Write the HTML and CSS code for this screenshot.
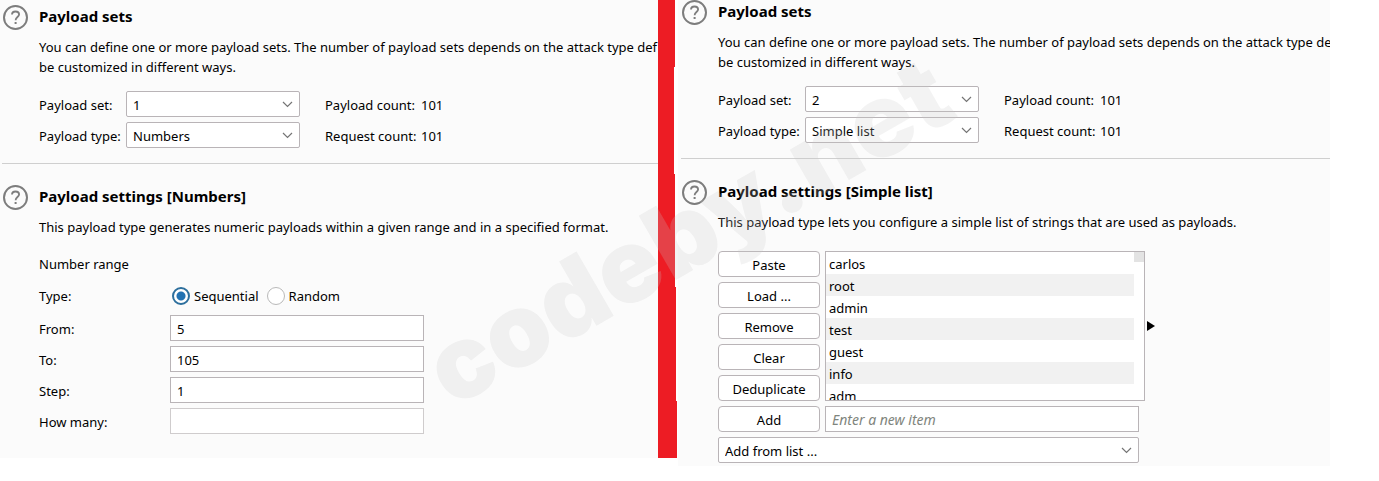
FILE: index.html
```html
<!DOCTYPE html>
<html lang="en">
<head>
<meta charset="utf-8">
<title>Payload sets</title>
<link rel="stylesheet" href="styles.css">
</head>
<body>
<svg class="defs" aria-hidden="true">
  <symbol id="help" viewBox="0 0 25 25">
    <circle cx="12.5" cy="12.5" r="11.5" fill="none" stroke="#7d7d7d" stroke-width="2"/>
    <path d="M9 9.6C9 7.6 10.4 6.5 12.5 6.5S16.1 7.7 16.1 9.5C16.1 12 12.6 12.2 12.6 15.2" fill="none" stroke="#7d7d7d" stroke-width="1.8"/>
    <rect x="11.6" y="17" width="2" height="2" fill="#7d7d7d"/>
  </symbol>
  <symbol id="chevron" viewBox="0 0 11 7">
    <path d="M1 1L5.5 5.5L10 1" fill="none" stroke="#757575" stroke-width="1.2"/>
  </symbol>
</svg>
<main class="board">
  <div class="panel panel-left">
    <section class="section">
      <svg class="help"><use href="#help"/></svg>
      <div class="body">
        <h2>Payload sets</h2>
        <p class="desc">You can define one or more payload sets. The number of payload sets depends on the attack type def<br>be customized in different ways.</p>
        <div class="sets">
          <label for="set1">Payload set:</label>
          <div class="select"><select id="set1"><option>1</option></select><svg class="chevron"><use href="#chevron"/></svg></div>
          <span class="count">Payload count:</span><span>101</span>
          <label for="type1">Payload type:</label>
          <div class="select"><select id="type1"><option>Numbers</option></select><svg class="chevron"><use href="#chevron"/></svg></div>
          <span class="count">Request count:</span><span>101</span>
        </div>
      </div>
    </section>
    <hr>
    <section class="section">
      <svg class="help"><use href="#help"/></svg>
      <div class="body">
        <h2>Payload settings [Numbers]</h2>
        <p class="desc">This payload type generates numeric payloads within a given range and in a specified format.</p>
        <h3>Number range</h3>
        <div class="range">
          <span>Type:</span>
          <div class="radios">
            <label><input type="radio" name="order" checked>Sequential</label>
            <label><input type="radio" name="order">Random</label>
          </div>
          <label for="from">From:</label><input class="field" type="text" id="from" value="5">
          <label for="to">To:</label><input class="field" type="text" id="to" value="105">
          <label for="step">Step:</label><input class="field" type="text" id="step" value="1">
          <label for="many">How many:</label><input class="field" type="text" id="many" disabled>
        </div>
      </div>
    </section>
  </div>
  <div class="divider"></div>
  <div class="panel panel-right">
    <section class="section">
      <svg class="help"><use href="#help"/></svg>
      <div class="body">
        <h2>Payload sets</h2>
        <p class="desc">You can define one or more payload sets. The number of payload sets depends on the attack type de<br>be customized in different ways.</p>
        <div class="sets">
          <label for="set2">Payload set:</label>
          <div class="select"><select id="set2"><option>2</option></select><svg class="chevron"><use href="#chevron"/></svg></div>
          <span class="count">Payload count:</span><span>101</span>
          <label for="type2">Payload type:</label>
          <div class="select"><select id="type2"><option>Simple list</option></select><svg class="chevron"><use href="#chevron"/></svg></div>
          <span class="count">Request count:</span><span>101</span>
        </div>
      </div>
    </section>
    <hr>
    <section class="section">
      <svg class="help"><use href="#help"/></svg>
      <div class="body">
        <h2>Payload settings [Simple list]</h2>
        <p class="desc">This payload type lets you configure a simple list of strings that are used as payloads.</p>
        <div class="editor">
          <div class="buttons">
            <button type="button">Paste</button>
            <button type="button">Load ...</button>
            <button type="button">Remove</button>
            <button type="button">Clear</button>
            <button type="button">Deduplicate</button>
          </div>
          <div class="list">
            <ul>
              <li>carlos</li><li>root</li><li>admin</li><li>test</li><li>guest</li><li>info</li><li>adm</li>
            </ul>
            <div class="thumb"></div>
          </div>
          <svg class="arrow" viewBox="0 0 8 10"><path d="M0 0L8 5L0 10Z"/></svg>
        </div>
        <div class="adder">
          <button type="button">Add</button>
          <input class="field" type="text" placeholder="Enter a new item" aria-label="New item">
          <div class="select from-list"><select aria-label="Add from list"><option>Add from list ...</option></select><svg class="chevron"><use href="#chevron"/></svg></div>
        </div>
      </div>
    </section>
  </div>
  <div class="watermark">codeby.net</div>
</main>
</body>
</html>
```
FILE: styles.css
```css
* { box-sizing: border-box; }

body {
  margin: 0;
  background: #fff;
  color: #000;
  font: 13px/20px "Noto Sans", "Open Sans", sans-serif;
}

.defs { position: absolute; width: 0; height: 0; }

.board {
  position: relative;
  display: grid;
  grid-template-columns: minmax(0, 658fr) 20px minmax(0, 652fr) 49px;
  align-items: start;
  overflow: hidden;
}

.panel {
  background: #fbfbfb;
  overflow: hidden;
  white-space: nowrap;
}
.panel-left { padding: 5px 0 24px 2px; }
.panel-right { padding: 0 0 3px 3px; }

.section { display: flex; gap: 11px; padding-left: 1px; }
.help { flex: none; width: 25px; height: 25px; }
.body { flex: 1; min-width: 0; }

h2 { margin: 0; font-size: 15px; line-height: 22px; font-weight: 700; }
h3 { margin: 17px 0 0; font-size: 13px; line-height: 20px; font-weight: 400; }
.desc { margin: 10px 0 0; }

hr { margin: 15px 0 21px; border: 0; border-top: 1px solid #cfcfcf; }

.sets {
  display: grid;
  grid-template-columns: 87px 174px 121px auto;
  grid-auto-rows: 26px;
  row-gap: 5px;
  align-items: center;
  margin-top: 14px;
}
.sets > span, .sets > label { padding-top: 2px; }
.sets .count { padding-left: 25px; }

.select { position: relative; height: 26px; }
select, .field, button {
  height: 26px;
  border: 1px solid #b9b4b7;
  background: #fff;
  color: #000;
  font: inherit;
}
select {
  appearance: none;
  width: 100%;
  padding: 2px 24px 0 6px;
  border-radius: 2px;
}
.chevron {
  position: absolute;
  top: 10px;
  right: 7px;
  width: 11px;
  height: 7px;
  pointer-events: none;
}

.range {
  display: grid;
  grid-template-columns: 131px 254px;
  grid-template-rows: 28px;
  grid-auto-rows: 26px;
  row-gap: 5px;
  align-items: center;
  margin-top: 8px;
}
.range > label { padding-top: 2px; }
.radios { display: flex; gap: 8px; padding-left: 2px; }
.radios label { display: flex; align-items: center; gap: 4px; }
.radios input {
  appearance: none;
  width: 18px;
  height: 18px;
  margin: 0;
  border: 1px solid #b9b9b9;
  border-radius: 50%;
  background: #fff;
}
.radios input:checked {
  border: 2px solid #2d6f9d;
  background: radial-gradient(circle, #2372b2 4px, #fff 5px);
}

.field { width: 100%; padding: 2px 6px 0; border-radius: 0; }
.field:disabled { border-color: #cfcccd; }
.field::placeholder { color: #7f857d; font-size: 14px; font-style: italic; opacity: 1; }

button { width: 100%; padding: 2px 0 0; border-radius: 4px; }

.editor {
  display: grid;
  grid-template-columns: 102px 320px 8px;
  align-items: center;
  margin-top: 19px;
  column-gap: 5px;
}
.buttons { display: grid; gap: 5px; }
.list {
  display: flex;
  height: 150px;
  border: 1px solid #b9b4b7;
  background: #fff;
  overflow: hidden;
}
ul { flex: 1; margin: 0; padding: 0; list-style: none; }
li { height: 22px; padding-left: 3px; line-height: 24px; }
li:nth-child(even) { background: #f1f1f1; }
.thumb { width: 10px; height: 10px; background: #e3e3e3; }
.arrow { width: 8px; height: 10px; margin-left: -3px; }

.adder {
  display: grid;
  grid-template-columns: 102px 314px;
  gap: 5px;
  margin-top: 5px;
}
.from-list { grid-column: 1 / -1; }

.divider {
  width: 19px;
  height: 458px;
  background: #ed1c24;
  clip-path: polygon(0 0, 17px 0, 17px 67px, 16px 67px, 16px 174px, 17px 174px, 17px 287px, 18px 287px, 18px 401px, 19px 401px, 19px 100%, 0 100%);
}

.watermark {
  position: absolute;
  left: 452px;
  top: 302px;
  color: rgba(200, 200, 200, 0.22);
  font-family: Inter, sans-serif;
  font-size: 102px;
  line-height: 140px;
  font-weight: 900;
  white-space: nowrap;
  transform-origin: 0 106px;
  transform: rotate(-30deg);
  pointer-events: none;
}
```
